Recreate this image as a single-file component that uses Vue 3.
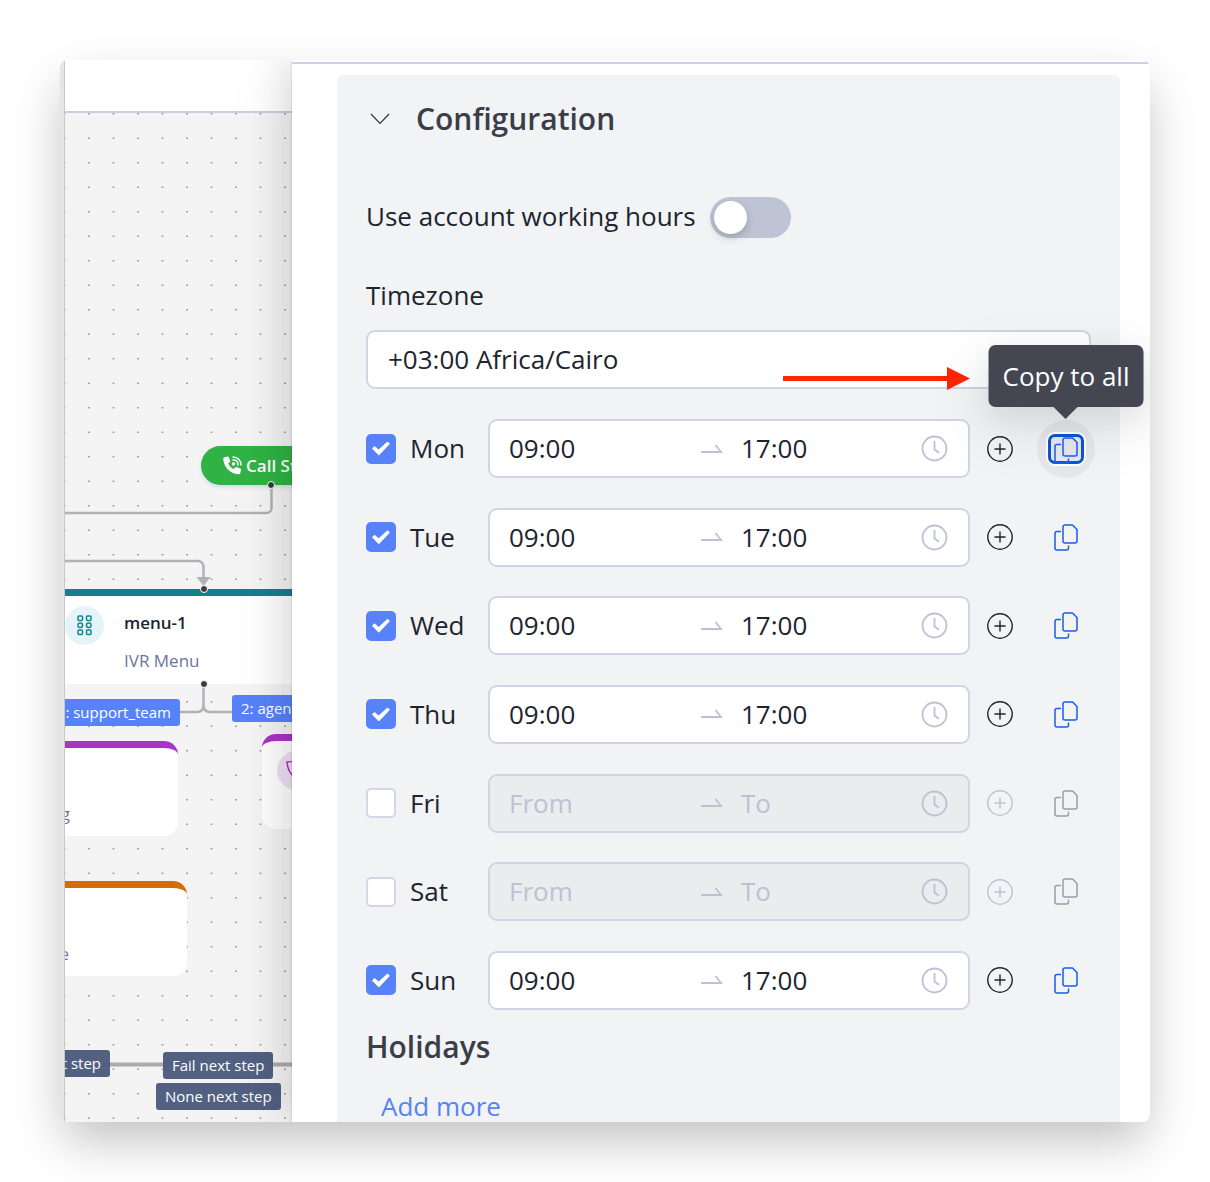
<script setup>
import { ref, reactive } from 'vue'

const useAccountHours = ref(false)
const timezone = ref('+03:00 Africa/Cairo')
const days = reactive([
  { name: 'Mon', enabled: true, from: '09:00', to: '17:00', hint: true },
  { name: 'Tue', enabled: true, from: '09:00', to: '17:00' },
  { name: 'Wed', enabled: true, from: '09:00', to: '17:00' },
  { name: 'Thu', enabled: true, from: '09:00', to: '17:00' },
  { name: 'Fri', enabled: false, from: '', to: '' },
  { name: 'Sat', enabled: false, from: '', to: '' },
  { name: 'Sun', enabled: true, from: '09:00', to: '17:00' }
])
</script>

<template>
  <main class="window">
    <section class="flow" aria-label="Call flow">
      <svg class="flow-lines" aria-hidden="true">
        <defs>
          <pattern id="dots" x="23" y="53" width="49" height="49" patternUnits="userSpaceOnUse">
            <g fill="#a3a3a5">
              <rect x="0" y="0" width="2" height="1.5" />
              <rect x="24.5" y="0" width="2" height="1.5" />
              <rect x="0" y="24.5" width="2" height="1.5" />
              <rect x="24.5" y="24.5" width="2" height="1.5" />
            </g>
          </pattern>
        </defs>
        <rect width="100%" height="100%" fill="url(#dots)" />
        <g fill="none" stroke="#b0b0b5" stroke-width="2.5">
          <path d="M206.500 426V448a5 5 0 0 1-5 5H0" />
          <path d="M0 501H133a5.500 5.500 0 0 1 5.500 5.500V520" />
          <path d="M138.500 624V646a6 6 0 0 1-6 6H110M138.500 646a6 6 0 0 0 6 6H170" />
          <path d="M40 1004.500H240" stroke="#aaaab0" stroke-width="4" />
        </g>
        <path d="M131.500 517h14l-7 9z" fill="#b0b0b5" />
      </svg>
      <div class="flow-bar"></div>

      <div class="node start">
        <svg width="19" height="19" viewBox="0 0 19 19" aria-hidden="true">
          <path d="M1 1.500 4.500.5c.6-.1 1 .1 1.200.6l1.500 3.600c.2.500.1.900-.3 1.200L5.200 7.400c1.200 2.600 3.100 4.500 5.700 5.700l1.500-1.800c.3-.4.8-.5 1.200-.3l3.800 1.600c.5.200.7.700.6 1.200L17.200 17.500c-.1.500-.5.800-1 .8C7.500 18.300.3 11 .3 2.500c0-.5.2-.9.7-1z" fill="#fff" />
          <g fill="none" stroke="#fff" stroke-width="1.500" stroke-linecap="round">
            <path d="M10 1c4.500 0 8 3.500 8 8M10 4c3 0 5 2 5 5" />
            <circle cx="10.500" cy="8" r="1" />
          </g>
        </svg>
        <strong>Call Start</strong>
      </div>

      <article class="node menu">
        <span class="bubble teal">
          <svg width="15" height="21" viewBox="0 0 15 21" fill="none" stroke="#168391" stroke-width="1.500" aria-hidden="true">
            <rect x="1" y="1" width="4.500" height="4.500" rx="1" /><rect x="9.500" y="1" width="4.500" height="4.500" rx="1" />
            <rect x="1" y="8" width="4.500" height="4.500" rx="2" /><rect x="9.500" y="8" width="4.500" height="4.500" rx="2" />
            <rect x="1" y="15" width="4.500" height="4.500" rx="1" /><rect x="9.500" y="15" width="4.500" height="4.500" rx="1" />
          </svg>
        </span>
        <div>
          <h3>menu-1</h3>
          <p>IVR Menu</p>
        </div>
      </article>

      <article class="node card ring"><p>Ring</p></article>
      <article class="node card agent">
        <span class="bubble violet">
          <svg width="22" height="24" viewBox="0 0 22 24" fill="none" stroke="#a834c4" stroke-width="1.500" aria-hidden="true">
            <path d="M1 3C5 3 8.500 2 11 .8 13.500 2 17 3 21 3 20.500 11 17.500 16 11 20 4.500 16 1.500 11 1 3z" />
            <path d="M7 10.500l3 3 5-5.500" />
          </svg>
        </span>
      </article>
      <article class="node card message"><p>Message</p></article>

      <span class="node tag support">1: support_team</span>
      <span class="node tag agents">2: agents</span>
      <span class="node tag slate next">Next step</span>
      <span class="node tag slate fail">Fail next step</span>
      <span class="node tag slate none">None next step</span>

      <i class="port start-out"></i>
      <i class="port menu-in"></i>
      <i class="port menu-out"></i>
    </section>

    <aside class="drawer">
      <form class="panel" @submit.prevent>
        <header class="panel-head">
          <button type="button" class="chevron" aria-label="Collapse configuration">
            <svg width="20" height="12" viewBox="0 0 20 12" fill="none" stroke="#2f3440" stroke-width="1.200" aria-hidden="true"><path d="M1 1l9 9.500L19 1" /></svg>
          </button>
          <h2>Configuration</h2>
        </header>

        <label class="switch-row">
          <span>Use account working hours</span>
          <input v-model="useAccountHours" class="switch" type="checkbox" role="switch" />
        </label>

        <label class="caption" for="timezone">Timezone</label>
        <div class="timezone">
          <select id="timezone" v-model="timezone">
            <option>+03:00 Africa/Cairo</option>
          </select>
          <svg class="pointer" width="187" height="24" viewBox="0 0 187 24" fill="#ff2600" aria-hidden="true">
            <path d="M0 10H164V1L187 12.500 164 24V15H0z" />
          </svg>
        </div>

        <ul class="days">
          <li v-for="day in days" :key="day.name" class="day">
            <label class="day-name">
              <input v-model="day.enabled" class="tick" type="checkbox" />
              <span>{{ day.name }}</span>
            </label>
            <div class="range" :class="{ off: !day.enabled }">
              <input v-model="day.from" type="text" placeholder="From" :aria-label="day.name + ' from'" :disabled="!day.enabled" />
              <svg class="to-arrow" width="22" height="10" viewBox="0 0 22 10" fill="none" stroke="#bcc1d3" stroke-width="1.800" aria-hidden="true"><path d="M0 8H20L14.500 1" /></svg>
              <input v-model="day.to" type="text" placeholder="To" :aria-label="day.name + ' to'" :disabled="!day.enabled" />
              <svg class="clock" width="27" height="27" viewBox="0 0 27 27" fill="none" stroke="#bcc1d3" stroke-width="1.800" aria-hidden="true"><circle cx="13.500" cy="13.500" r="12" /><path d="M13.500 6v8.500l4.500 3.300" /></svg>
            </div>
            <button type="button" class="add" :disabled="!day.enabled" :aria-label="'Add interval to ' + day.name">
              <svg width="26" height="26" viewBox="0 0 26 26" fill="none" stroke="currentColor" stroke-width="1.400" aria-hidden="true"><circle cx="13" cy="13" r="12.200" /><path d="M13 7.500v11M7.500 13h11" /></svg>
            </button>
            <button type="button" class="copy" :class="{ active: day.hint }" :disabled="!day.enabled" :aria-label="'Copy ' + day.name + ' to all'">
              <span class="copy-icon">
                <svg width="24" height="27" viewBox="0 0 24 27" fill="none" stroke="currentColor" stroke-width="1.500" aria-hidden="true">
                  <path d="M11 1h7.500L23 5.500V17a2 2 0 0 1-2 2H11a2 2 0 0 1-2-2V3a2 2 0 0 1 2-2z" />
                  <path d="M7 7.500H3a2 2 0 0 0-2 2V24a2 2 0 0 0 2 2h9.500a2 2 0 0 0 2-2v-2.500" />
                </svg>
              </span>
              <span v-if="day.hint" class="tooltip" role="tooltip">Copy to all</span>
            </button>
          </li>
        </ul>

        <h2 class="holidays">Holidays</h2>
        <a class="more" href="#">Add more</a>
      </form>
    </aside>
  </main>
</template>

<style>
body {
  background: #fff;
}
</style>

<style scoped>
* {
  box-sizing: border-box;
}
.window {
  display: flex;
  height: calc(100vh - 120px);
  margin: 60px;
  overflow: hidden;
  border-radius: 8px;
  background: #fff;
  box-shadow: 0 22px 50px -4px rgba(0, 0, 0, 0.25);
  font-family: "Open Sans", "Noto Sans", sans-serif;
  color: #20242f;
}
.window::before {
  content: "";
  flex: 0 0 4px;
  border-right: 1px solid #c8c8c6;
  background: #e5e5e3;
}
h2, h3, p, ul {
  margin: 0;
  padding: 0;
}
button {
  padding: 0;
  border: 0;
  background: none;
  font: inherit;
}
input, select {
  margin: 0;
  font: inherit;
  color: inherit;
}

/* call flow canvas */
.flow {
  position: relative;
  flex: 0 0 227px;
  overflow: hidden;
  background: #f4f4f4;
}
.flow-lines {
  position: absolute;
  inset: 0;
  width: 100%;
  height: 100%;
}
.flow-bar {
  position: relative;
  height: 53px;
  border-bottom: 2px solid #c9cee0;
  background: #fff;
}
.node {
  position: absolute;
}
.start {
  left: 136px;
  top: 386px;
  display: flex;
  align-items: center;
  gap: 4px;
  width: 140px;
  height: 39px;
  padding-left: 22px;
  border-radius: 20px;
  background: #30b344;
  color: #fff;
  font-size: 17px;
  white-space: nowrap;
  box-shadow: 0 2px 4px rgba(80, 110, 240, 0.2);
}
.start strong {
  font-weight: 600;
}
.menu {
  left: -20px;
  top: 529px;
  display: flex;
  gap: 20px;
  width: 320px;
  height: 95px;
  padding: 10px 0 0 20px;
  border-top: 7px solid #14808c;
  background: #fff;
}
.menu h3 {
  font-size: 17px;
  line-height: 34px;
  font-weight: 600;
}
.menu p {
  margin-top: 5px;
}
.node p {
  font-size: 17px;
  line-height: 32px;
  color: #6b769c;
}
.bubble {
  display: grid;
  place-items: center;
  width: 39px;
  height: 39px;
  border-radius: 50%;
}
.teal {
  background: #e5f4f8;
}
.violet {
  background: #f1dff5;
}
.card {
  height: 95px;
  border-top: 7px solid #a834c4;
  border-radius: 14px;
  background: #fff;
}
.card p {
  margin-top: 50px;
  text-align: right;
}
.ring {
  left: -87px;
  top: 681px;
  width: 200px;
  padding-right: 108px;
}
.agent {
  left: 197px;
  top: 674px;
  width: 200px;
  padding: 10px 15px;
}
.message {
  left: -78px;
  top: 821px;
  width: 200px;
  padding-right: 118px;
  border-top-color: #d07000;
}
.tag {
  height: 27px;
  padding: 0 9px;
  border-radius: 3px;
  background: #5782fa;
  color: #fff;
  font-size: 15px;
  line-height: 27px;
  font-weight: 500;
  white-space: nowrap;
}
.support {
  right: 112px;
  top: 639px;
}
.agents {
  left: 167px;
  top: 635px;
}
.slate {
  background: #526082;
}
.next {
  right: 182px;
  top: 990px;
}
.fail {
  left: 98px;
  top: 992px;
}
.none {
  left: 91px;
  top: 1023px;
}
.port {
  position: absolute;
  width: 8px;
  height: 8px;
  border: 1px solid #fff;
  border-radius: 50%;
  background: #3b3b3f;
}
.start-out {
  left: 202px;
  top: 421px;
}
.menu-in {
  left: 135px;
  top: 525px;
}
.menu-out {
  left: 135px;
  top: 620px;
}

/* settings drawer */
.drawer {
  position: relative;
  flex: 1;
  min-width: 0;
  padding: 2px 0 0;
  background: #fff;
  box-shadow: -8px 0 32px rgba(0, 0, 0, 0.1), -18px 0 56px rgba(0, 0, 0, 0.05), 0 0 2px rgba(0, 0, 0, 0.2);
}
.drawer::before {
  content: "";
  display: block;
  height: 2px;
  margin-bottom: 11px;
  background: #cdd1e6;
}
.panel {
  min-height: 100%;
  margin: 0 30px 0 45px;
  padding: 0 25px 0 29px;
  border-radius: 6px;
  background: #f2f3f5;
  font-size: 26px;
  line-height: 36px;
}
.panel-head {
  display: flex;
  align-items: center;
  gap: 26px;
  height: 88px;
  padding-left: 4px;
}
h2 {
  font-size: 30px;
  line-height: 40px;
  font-weight: 600;
  color: #3a3e49;
}
.chevron {
  display: flex;
}
.switch-row {
  display: flex;
  align-items: center;
  gap: 14px;
  height: 41px;
  margin: 34px 0 39px;
}
.switch-row span {
  padding-bottom: 4px;
}
.switch {
  appearance: none;
  width: 81px;
  height: 41px;
  padding: 4px;
  border-radius: 21px;
  background: #bec4d4;
}
.switch::before {
  content: "";
  display: block;
  width: 33px;
  height: 33px;
  border-radius: 50%;
  background: #fff;
  box-shadow: 0 4px 8px rgba(0, 35, 11, 0.2);
}
.switch:checked {
  background: #5782fa;
}
.switch:checked::before {
  margin-left: auto;
}
.caption {
  display: block;
}
.timezone {
  position: relative;
  margin: 17px 4px 30px 0;
}
.timezone select {
  appearance: none;
  display: block;
  width: 100%;
  height: 59px;
  padding: 0 20px 1px;
  border: 2px solid #d0d4e6;
  border-radius: 9px;
  background: #fff;
}
.pointer {
  position: absolute;
  right: 121px;
  top: 36px;
}
.days {
  display: flex;
  flex-direction: column;
  justify-content: space-between;
  min-height: 591px;
  list-style: none;
}
.day {
  display: flex;
  align-items: center;
}
.day-name {
  display: flex;
  align-items: center;
  gap: 14px;
  width: 122px;
}
.day-name span {
  padding-bottom: 1px;
}
.tick {
  appearance: none;
  display: grid;
  place-items: center;
  width: 30px;
  height: 30px;
  border: 2px solid #d3d7e8;
  border-radius: 5px;
  background: #fff;
}
.tick:checked {
  border-color: #5782fa;
  background: #5782fa;
}
.tick:checked::before {
  content: "";
  width: 18px;
  height: 14px;
  background: #fff;
  clip-path: polygon(0 50%, 14% 32%, 37% 58%, 86% 0, 100% 16%, 38% 100%);
}
.range {
  display: flex;
  flex: 1;
  align-items: center;
  min-width: 0;
  height: 59px;
  padding: 0 20px 0 19px;
  border: 2px solid #d0d4e6;
  border-radius: 9px;
  background: #fff;
}
.range input {
  flex: 1;
  width: 0;
  min-width: 0;
  padding: 0 0 1px;
  border: 0;
  background: none;
}
.range input::placeholder {
  color: #bcc2d3;
  opacity: 1;
}
.range.off {
  background: #ebecee;
}
.to-arrow {
  margin: 0 18px 0 12px;
}
.add {
  display: grid;
  place-items: center;
  width: 60px;
  height: 59px;
  color: #20242f;
}
.add:disabled {
  color: #bcc1d3;
}
.copy {
  position: relative;
  display: grid;
  place-items: center;
  width: 58px;
  height: 58px;
  margin-left: 7px;
  border-radius: 50%;
  color: #1d5cf0;
}
.copy:disabled {
  color: #969dad;
}
.copy-icon {
  display: grid;
  place-items: center;
}
.active {
  background: #e6e7ea;
}
.active .copy-icon {
  width: 36px;
  height: 30px;
  border: 3px solid #0b57d0;
  border-radius: 7px;
  box-shadow: 0 0 0 2px #fff;
}
.tooltip {
  position: absolute;
  left: 50%;
  bottom: 71px;
  z-index: 2;
  padding: 13px 14px;
  border-radius: 7px;
  background: #444751;
  color: #fff;
  line-height: 36px;
  white-space: nowrap;
  transform: translateX(-50%);
  box-shadow: 0 12px 32px rgba(0, 0, 0, 0.08), 0 18px 56px 16px rgba(0, 0, 0, 0.05);
}
.tooltip::after {
  content: "";
  position: absolute;
  left: 50%;
  top: 100%;
  margin-left: -12px;
  border: 12px solid transparent;
  border-top-color: #444751;
  border-bottom: 0;
}
.holidays {
  margin-top: 17px;
}
.more {
  display: block;
  margin: 21px 0 0 15px;
  color: #5782fa;
  text-decoration: none;
}
</style>
